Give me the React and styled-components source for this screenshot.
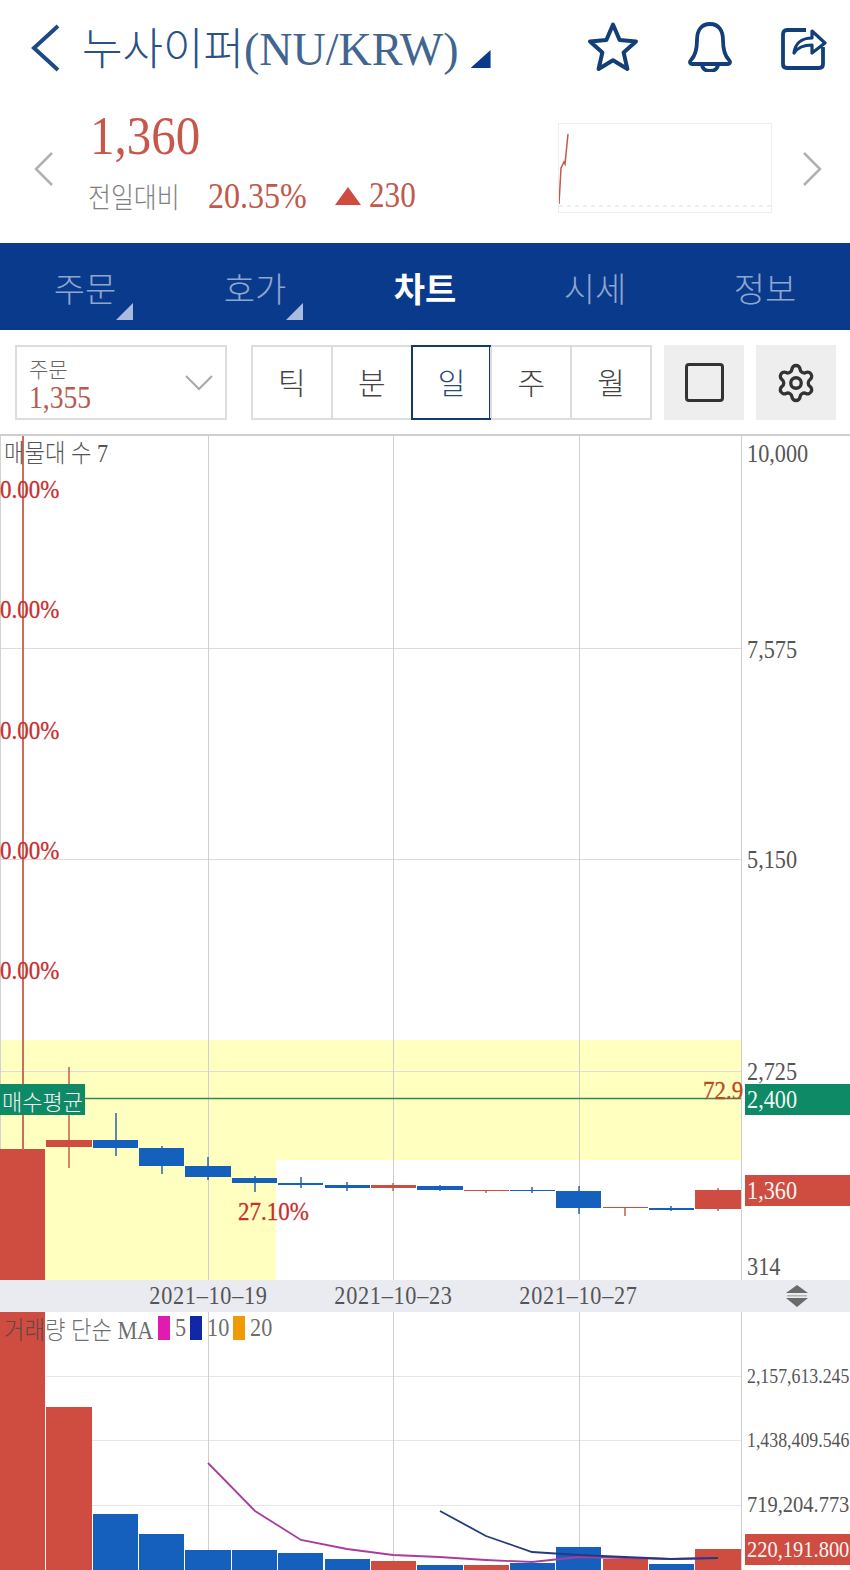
import { Settings } from "lucide-react"
import styled, { createGlobalStyle, css } from "styled-components"

const RED = "#cf4c40"
const BLUE = "#1560bd"
const NAVY = "#0a3a8c"
const GREEN = "#0e8a66"

// the app font is a tall narrow myeongjo, closest we get is squeezing the serif
const narrow = css`
  display: inline-block;
  transform: scaleX(0.89);
  transform-origin: left center;
`

const GlobalStyle = createGlobalStyle`
  html, body {
    margin: 0;
    padding: 0;
    background: #fff;
    overflow: hidden;
  }
  * {
    box-sizing: border-box;
  }
  body {
    font-family: "Liberation Serif", "Noto Sans CJK KR", serif;
    font-weight: 300;
  }
`

const Page = styled.div`
  width: 850px;
  height: 1570px;
  overflow: hidden;
  background: #fff;
`

const Header = styled.header`
  height: 100px;
  display: flex;
  align-items: center;
  padding: 0 23px 0 30px;
`

const BackSvg = styled.svg`
  margin-top: -4px;
`

const Title = styled.h1`
  margin: 0 0 0 20px;
  font-size: 44px;
  font-weight: 300;
  line-height: 1;
  color: #2a5286;
  white-space: nowrap;
`

const TitleCode = styled.span`
  font-size: 46px;
  font-weight: 400;
  color: #41658f;
`

const TitleCaret = styled.span`
  width: 20px;
  height: 18px;
  margin: 18px 0 0 12px;
  background: ${NAVY};
  clip-path: polygon(100% 0, 100% 100%, 0 100%);
`

const HeaderIcons = styled.div`
  margin-left: auto;
  margin-top: -7px;
  display: flex;
  align-items: center;
  gap: 48px;
`

const PriceRow = styled.section`
  height: 143px;
  display: flex;
  align-items: center;
  padding: 0 28px 0 34px;
`

const PriceInfo = styled.div`
  width: 470px;
  margin-left: 34px;
  display: flex;
  flex-direction: column;
  margin-top: -18px;
`

const Price = styled.div`
  ${narrow}
  font-size: 55px;
  line-height: 58px;
  color: #c8564a;
  margin: -2px 0 0 2px;
`

const ChangeRow = styled.div`
  display: flex;
  align-items: center;
  height: 40px;
  margin-top: 11px;
`

const ChangeLabel = styled.span`
  ${narrow}
  font-size: 28px;
  color: #808080;
  width: 120px;
`

const ChangeRate = styled.span`
  ${narrow}
  font-size: 36px;
  color: #c0584c;
  width: 127px;
`

const UpMark = styled.span`
  width: 26px;
  height: 18px;
  background: ${RED};
  clip-path: polygon(50% 0, 100% 100%, 0 100%);
  margin-right: 8px;
`

const ChangeValue = styled.span`
  ${narrow}
  font-size: 35px;
  color: #c0584c;
`

const MiniChart = styled.div`
  width: 214px;
  height: 90px;
  margin-top: -8px;
  border: 1px solid #efefef;
`

const PagerIcon = styled.svg`
  margin-top: -6px;
  margin-left: ${(p) => p.$gap || 0}px;
`

const Nav = styled.nav`
  height: 87px;
  display: grid;
  grid-template-columns: repeat(5, 170px);
  background: ${NAVY};
`

const NavItem = styled.div`
  position: relative;
  display: flex;
  align-items: center;
  justify-content: center;
  font-size: 34px;
  padding-top: 2px;
  font-weight: ${(p) => (p.$active ? 700 : 300)};
  color: ${(p) => (p.$active ? "#fff" : "#8fa6cf")};

  &::after {
    content: "";
    display: ${(p) => (p.$menu ? "block" : "none")};
    position: absolute;
    left: 116px;
    top: 60px;
    width: 17px;
    height: 17px;
    background: #aabcdd;
    clip-path: polygon(100% 0, 100% 100%, 0 100%);
  }
`

const Toolbar = styled.div`
  height: 106px;
  padding: 15px 14px 0 15px;
  display: flex;
  align-items: flex-start;
  border-bottom: 2px solid #cfcfcf;
`

const Select = styled.div`
  width: 212px;
  height: 75px;
  border: 2px solid #ddd;
  padding: 0 12px;
  display: flex;
  align-items: center;
  justify-content: space-between;
`

const SelectText = styled.div`
  display: flex;
  flex-direction: column;
  margin-top: 4px;
`

const SelectLabel = styled.span`
  font-size: 21px;
  line-height: 26px;
  color: #666;
`

const SelectValue = styled.span`
  ${narrow}
  font-size: 31px;
  line-height: 30px;
  color: #b85a50;
`

const Segments = styled.div`
  width: 401px;
  height: 75px;
  margin-left: 24px;
  display: grid;
  grid-template-columns: repeat(5, 1fr);
  border: solid #ddd;
  border-width: 2px 2px 2px 0;
`

const Segment = styled.div`
  position: relative;
  display: flex;
  align-items: center;
  justify-content: center;
  font-size: 30px;
  padding-bottom: 4px;
  color: ${(p) => (p.$active ? "#2a4a7a" : "#444")};
  border-left: 2px solid #ddd;

  &::after {
    content: "";
    display: ${(p) => (p.$active ? "block" : "none")};
    position: absolute;
    inset: -2px -1px -2px -2px;
    border: 2px solid #123a6b;
  }
`

const ToolButton = styled.div`
  width: 80px;
  height: 75px;
  margin-left: ${(p) => p.$gap}px;
  background: #eee;
  display: flex;
  align-items: center;
  justify-content: center;
  color: #333;
`

const SquareIcon = styled.span`
  width: 39px;
  height: 39px;
  border: 3.5px solid #333;
  border-radius: 4px;
`

const ChartPanel = styled.div`
  position: relative;
  height: 844px;
  overflow: hidden;
`

const VolumePanel = styled.div`
  position: relative;
  height: 258px;
  overflow: hidden;
`

const Drawing = styled.svg`
  display: block;
`

const ChartLabel = styled.span`
  position: absolute;
  left: ${(p) => p.$x}px;
  top: ${(p) => p.$y}px;
  transform: translateY(-50%) scaleX(0.89);
  transform-origin: left center;
  font-size: ${(p) => p.$size || 25}px;
  line-height: 1;
  white-space: nowrap;
  color: ${(p) => p.$color || "#555"};
`

const RateLabel = styled(ChartLabel)`
  font-size: 25px;
  transform: translateY(-50%) scaleX(0.92);
  color: ${(p) => p.$color || "#c62f2f"};
  -webkit-text-stroke: 0.3px currentColor;
`

const PriceTag = styled.span`
  position: absolute;
  left: ${(p) => p.$x}px;
  right: 0;
  top: ${(p) => p.$y}px;
  height: 31px;
  padding-left: 2px;
  display: flex;
  align-items: center;
  white-space: nowrap;
  color: #f4f4f4;
  background: ${(p) => p.$bg};
`

const TagText = styled.span`
  ${narrow}
  font-size: ${(p) => p.$size || 25}px;
`

const AvgBadge = styled(PriceTag)`
  right: auto;
  width: 85px;
  font-size: 22px;
`

const DateStrip = styled.div`
  position: relative;
  height: 32px;
  background: #e9ebf0;
  display: flex;
  align-items: center;
`

const DateLabel = styled.span`
  width: 185px;
  text-align: center;
  font-size: 25px;
  letter-spacing: 0.8px;
  color: #555;
  white-space: nowrap;
  transform: scaleX(0.89);
`

const DateGutter = styled.span`
  width: 116px;
`

const ScaleIcon = styled.svg`
  margin-left: 114px;
`

const Legend = styled.div`
  position: absolute;
  left: 4px;
  top: 4px;
  height: 24px;
  display: flex;
  align-items: center;
  font-size: 25px;
  color: rgba(70, 70, 70, 0.8);
  white-space: nowrap;
`

const LegendName = styled.span`
  ${narrow}
  width: 154px;
`

const LegendSwatch = styled.span`
  width: 12px;
  height: 24px;
  background: ${(p) => p.$color};
  margin-right: 5px;
`

const LegendValue = styled.span`
  ${narrow}
  width: ${(p) => p.$w}px;
`

const candles = [
  { x: 46, w: 46, top: 1140, bottom: 1147, wx: 69, wt: 1067, wb: 1168, up: true },
  { x: 93, w: 45, top: 1140, bottom: 1148, wx: 116, wt: 1113, wb: 1156 },
  { x: 139, w: 45, top: 1148, bottom: 1166, wx: 162, wt: 1146, wb: 1174 },
  { x: 185, w: 46, top: 1166, bottom: 1177, wx: 208, wt: 1157, wb: 1180 },
  { x: 232, w: 45, top: 1178, bottom: 1183, wx: 255, wt: 1176, wb: 1192 },
  { x: 278, w: 45, top: 1183, bottom: 1185, wx: 301, wt: 1177, wb: 1188 },
  { x: 325, w: 45, top: 1185, bottom: 1188, wx: 347, wt: 1182, wb: 1191 },
  { x: 371, w: 45, top: 1185, bottom: 1188, wx: 393, wt: 1183, wb: 1191, up: true },
  { x: 417, w: 46, top: 1186, bottom: 1190, wx: 440, wt: 1185, wb: 1191 },
  { x: 464, w: 45, top: 1190, bottom: 1191, wx: 486, wt: 1190, wb: 1193, up: true },
  { x: 510, w: 45, top: 1190, bottom: 1191, wx: 532, wt: 1187, wb: 1193 },
  { x: 556, w: 45, top: 1191, bottom: 1208, wx: 579, wt: 1186, wb: 1214 },
  { x: 603, w: 45, top: 1207, bottom: 1208, wx: 625, wt: 1208, wb: 1216, up: true },
  { x: 649, w: 45, top: 1208, bottom: 1210, wx: 671, wt: 1206, wb: 1211 },
  { x: 695, w: 46, top: 1190, bottom: 1209, wx: 718, wt: 1188, wb: 1211, up: true },
]

const volumes = [
  { x: 0, w: 45, top: 1312, up: true },
  { x: 46, w: 46, top: 1407, up: true },
  { x: 93, w: 45, top: 1514 },
  { x: 139, w: 45, top: 1534 },
  { x: 185, w: 46, top: 1550 },
  { x: 232, w: 45, top: 1550 },
  { x: 278, w: 45, top: 1553 },
  { x: 325, w: 45, top: 1559 },
  { x: 371, w: 45, top: 1561, up: true },
  { x: 417, w: 46, top: 1565 },
  { x: 464, w: 45, top: 1565, up: true },
  { x: 510, w: 45, top: 1563 },
  { x: 556, w: 45, top: 1547 },
  { x: 603, w: 45, top: 1559, up: true },
  { x: 649, w: 45, top: 1564 },
  { x: 695, w: 46, top: 1549, up: true },
]

const ma5 =
  "208,1463 255,1511 301,1540 347,1549 393,1555 439,1557 486,1560 532,1562 579,1557 625,1558 671,1559 718,1558"
const ma10 = "440,1511 486,1536 532,1552 579,1555 625,1557 671,1559 718,1558"

const grid = [208, 393, 579, 741]

function BackIcon() {
  return (
    <BackSvg width="32" height="48" viewBox="0 0 32 48" fill="none">
      <path d="M28 2 4 24l24 22" stroke="#1d4a86" strokeWidth="4" />
    </BackSvg>
  )
}

function StarIcon() {
  return (
    <svg width="52" height="52" viewBox="0 0 52 52" fill="none">
      <path
        d="M26 3.5 32.6 19 49 20.4 36.6 31.4 40.4 48 26 39.2 11.600 48 15.400 31.400 3 20.400 19.400 19Z"
        stroke="#123f78"
        strokeWidth="4"
        strokeLinejoin="round"
      />
    </svg>
  )
}

function BellIcon() {
  return (
    <svg width="46" height="50" viewBox="0 0 46 50" fill="none" stroke="#123f78" strokeWidth="3.800">
      <path
        d="M23 2C14 2 10 9 10 18c0 11-2 16-6 20-2 2-1 4 1 4h36c2 0 3-2 1-4-4-4-6-9-6-20C36 9 32 2 23 2Z"
        strokeLinejoin="round"
      />
      <path d="M15 42c0 5 4 7 8 7s8-2 8-7" />
    </svg>
  )
}

function ShareIcon() {
  return (
    <svg width="46" height="46" viewBox="0 0 46 46" fill="none" stroke="#123f78" strokeWidth="3.800">
      <path d="M25 6H6C3.500 6 2 7.500 2 10v30c0 2.500 1.500 4 4 4h32c2.500 0 4-1.500 4-4V23" />
      <path d="M13 29c1-9 7-15 18-15V7l13 12-13 10v-8c-8 0-14 2-18 8Z" strokeWidth="3.200" strokeLinejoin="round" />
    </svg>
  )
}

function PagerChevron({ dir, gap }) {
  return (
    <PagerIcon $gap={gap} width="20" height="34" viewBox="0 0 20 34" fill="none">
      <path d={dir === "left" ? "M18 1 2 17l16 16" : "M2 1l16 16L2 33"} stroke="#b0b0b0" strokeWidth="2.500" />
    </PagerIcon>
  )
}

function ChartDrawing() {
  return (
    <Drawing width="850" height="844" viewBox="0 436 850 844">
      <rect x="0" y="1040" width="741" height="120" fill="#ffffc0" />
      <rect x="45" y="1160" width="231" height="120" fill="#ffffc0" />
      {[648, 859, 1071].map((y) => (
        <line key={y} x1="0" x2="741" y1={y} y2={y} stroke="#dcdcdc" shapeRendering="crispEdges" />
      ))}
      {grid.map((x) => (
        <line key={x} x1={x} x2={x} y1="436" y2="1280" stroke="#cfcfcf" shapeRendering="crispEdges" />
      ))}
      <line x1="0.500" x2="0.500" y1="436" y2="1280" stroke="#d2d2d2" />
      <rect x="0" y="1149" width="45" height="131" fill={RED} />
      <line x1="23" x2="23" y1="436" y2="1150" stroke="#cf6a5e" strokeWidth="2" />
      <line x1="0" x2="741" y1="1098.500" y2="1098.500" stroke="#2e8a4e" strokeWidth="1.500" />
      {candles.map((c) => {
        const color = c.up ? RED : BLUE
        return (
          <g key={c.x}>
            <line x1={c.wx} x2={c.wx} y1={c.wt} y2={c.wb} stroke={c.up ? "#c0614a" : "#2a62a8"} strokeWidth="1.500" />
            <rect x={c.x} y={c.top} width={c.w} height={c.bottom - c.top} fill={color} />
          </g>
        )
      })}
    </Drawing>
  )
}

function VolumeDrawing() {
  return (
    <Drawing width="850" height="258" viewBox="0 1312 850 258">
      {[1376, 1440, 1505].map((y) => (
        <line key={y} x1="46" x2="741" y1={y} y2={y} stroke="#e6e6e6" shapeRendering="crispEdges" />
      ))}
      {grid.map((x) => (
        <line key={x} x1={x} x2={x} y1="1312" y2="1570" stroke="#cfcfcf" shapeRendering="crispEdges" />
      ))}
      {volumes.map((v) => (
        <rect key={v.x} x={v.x} y={v.top} width={v.w} height={1570 - v.top} fill={v.up ? RED : BLUE} />
      ))}
      <polyline points={ma5} fill="none" stroke="#a83d9e" strokeWidth="1.800" />
      <polyline points={ma10} fill="none" stroke="#233a80" strokeWidth="1.800" />
    </Drawing>
  )
}

export default function App() {
  return (
    <Page>
      <GlobalStyle />
      <Header>
        <BackIcon />
        <Title>
          누사이퍼<TitleCode>(NU/KRW)</TitleCode>
        </Title>
        <TitleCaret />
        <HeaderIcons>
          <StarIcon />
          <BellIcon />
          <ShareIcon />
        </HeaderIcons>
      </Header>

      <PriceRow>
        <PagerChevron dir="left" />
        <PriceInfo>
          <Price>1,360</Price>
          <ChangeRow>
            <ChangeLabel>전일대비</ChangeLabel>
            <ChangeRate>20.35%</ChangeRate>
            <UpMark />
            <ChangeValue>230</ChangeValue>
          </ChangeRow>
        </PriceInfo>
        <MiniChart>
          <Drawing width="212" height="88" viewBox="0 0 212 88">
            <line x1="0" x2="212" y1="82" y2="82" stroke="#dfdfdf" strokeDasharray="4 4" />
            <polyline points="0,80 2,44 5,38 6,40 9,10" fill="none" stroke="#c8564a" strokeWidth="1.500" />
          </Drawing>
        </MiniChart>
        <PagerChevron dir="right" gap={30} />
      </PriceRow>

      <Nav>
        <NavItem $menu>주문</NavItem>
        <NavItem $menu>호가</NavItem>
        <NavItem $active>차트</NavItem>
        <NavItem>시세</NavItem>
        <NavItem>정보</NavItem>
      </Nav>

      <Toolbar>
        <Select>
          <SelectText>
            <SelectLabel>주문</SelectLabel>
            <SelectValue>1,355</SelectValue>
          </SelectText>
          <svg width="28" height="16" viewBox="0 0 28 16" fill="none">
            <path d="M1 1l13 13L27 1" stroke="#a8a8a8" strokeWidth="2" />
          </svg>
        </Select>
        <Segments>
          <Segment>틱</Segment>
          <Segment>분</Segment>
          <Segment $active>일</Segment>
          <Segment>주</Segment>
          <Segment>월</Segment>
        </Segments>
        <ToolButton $gap={12}>
          <SquareIcon />
        </ToolButton>
        <ToolButton $gap={12}>
          <Settings size={42} strokeWidth={1.900} />
        </ToolButton>
      </Toolbar>

      <ChartPanel>
        <ChartDrawing />
        <ChartLabel $x={4} $y={17}>매물대 수 7</ChartLabel>
        <RateLabel $x={0} $y={53}>0.00%</RateLabel>
        <RateLabel $x={0} $y={173}>0.00%</RateLabel>
        <RateLabel $x={0} $y={294}>0.00%</RateLabel>
        <RateLabel $x={0} $y={414}>0.00%</RateLabel>
        <RateLabel $x={0} $y={534}>0.00%</RateLabel>
        <RateLabel $x={238} $y={775}>27.10%</RateLabel>
        <RateLabel $x={703} $y={654} $color="#c0481f">72.9</RateLabel>
        <ChartLabel $x={747} $y={17}>10,000</ChartLabel>
        <ChartLabel $x={747} $y={213}>7,575</ChartLabel>
        <ChartLabel $x={747} $y={423}>5,150</ChartLabel>
        <ChartLabel $x={747} $y={635}>2,725</ChartLabel>
        <ChartLabel $x={747} $y={830}>314</ChartLabel>
        <AvgBadge $x={0} $y={648} $bg={GREEN}>매수평균</AvgBadge>
        <PriceTag $x={745} $y={648} $bg={GREEN}>
          <TagText>2,400</TagText>
        </PriceTag>
        <PriceTag $x={745} $y={739} $bg={RED}>
          <TagText>1,360</TagText>
        </PriceTag>
      </ChartPanel>

      <DateStrip>
        <DateGutter />
        <DateLabel>2021–10–19</DateLabel>
        <DateLabel>2021–10–23</DateLabel>
        <DateLabel>2021–10–27</DateLabel>
        <ScaleIcon width="24" height="24" viewBox="0 0 24 24" fill="#6a6a6a">
          <path d="M12 1 23 9H1Z" />
          <rect x="2" y="11" width="20" height="1.500" fill="#b5b5b5" />
          <path d="M1 14h22L12 23Z" />
        </ScaleIcon>
      </DateStrip>

      <VolumePanel>
        <VolumeDrawing />
        <Legend>
          <LegendName>거래량 단순 MA</LegendName>
          <LegendSwatch $color="#e01bb0" />
          <LegendValue $w={15}>5</LegendValue>
          <LegendSwatch $color="#1028a8" />
          <LegendValue $w={26}>10</LegendValue>
          <LegendSwatch $color="#ee9a00" />
          <LegendValue $w={26}>20</LegendValue>
        </Legend>
        <ChartLabel $x={747} $y={64} $size={20}>2,157,613.245</ChartLabel>
        <ChartLabel $x={747} $y={128} $size={20}>1,438,409.546</ChartLabel>
        <ChartLabel $x={747} $y={192} $size={23}>719,204.773</ChartLabel>
        <PriceTag $x={745} $y={222} $bg={RED}>
          <TagText $size={23}>220,191.800</TagText>
        </PriceTag>
      </VolumePanel>
    </Page>
  )
}
